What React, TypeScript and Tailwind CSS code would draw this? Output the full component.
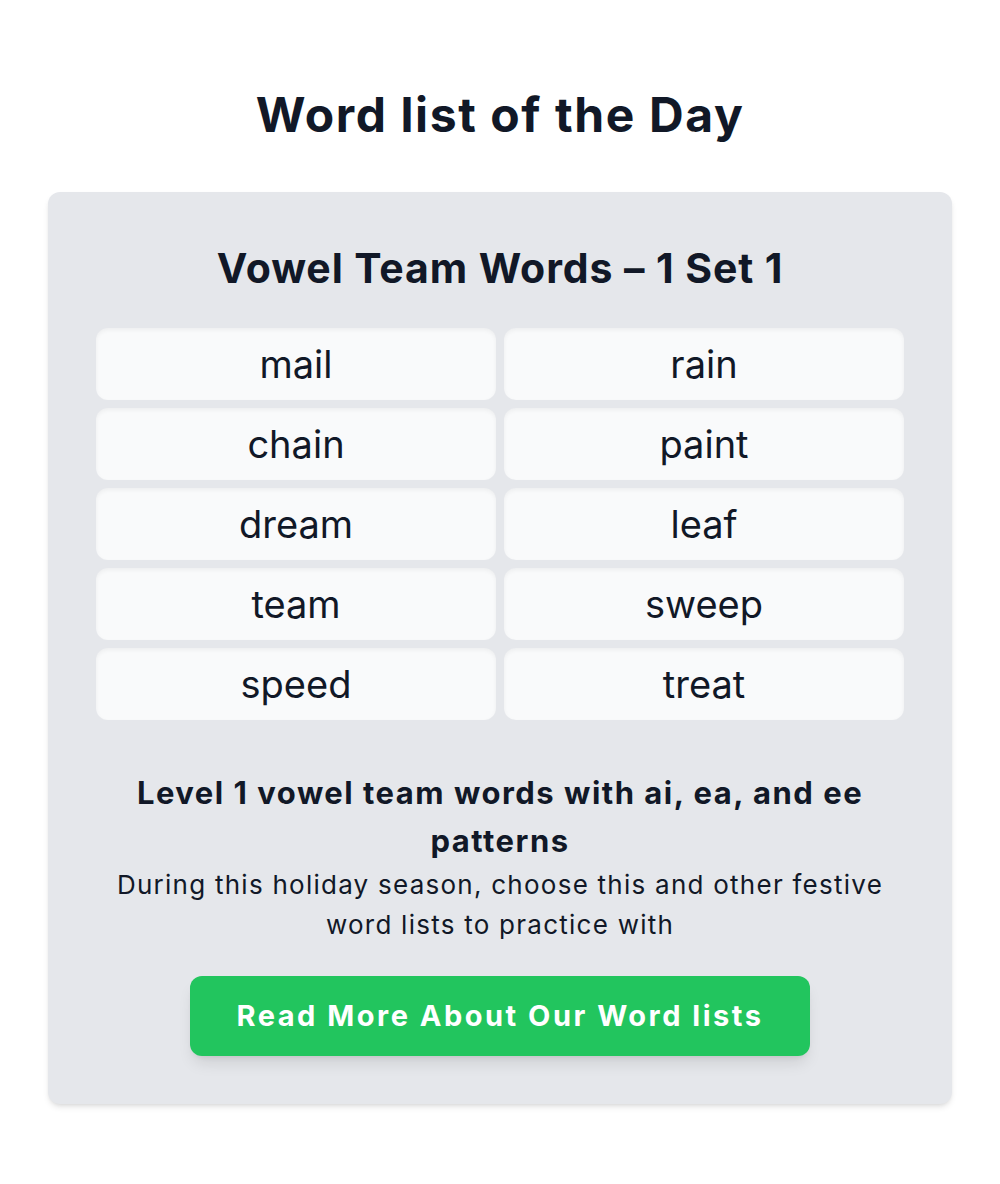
import React from 'react';

const words = ['mail', 'rain', 'chain', 'paint', 'dream', 'leaf', 'team', 'sweep', 'speed', 'treat'];

const App: React.FC = () => {
  return (
    <div className="min-h-[1184px] bg-white flex flex-col items-center pt-[87px] text-[#111827] font-['Inter',sans-serif]">
      <h1 className="text-[48px] leading-[56px] font-bold tracking-[1.6px]">Word list of the Day</h1>

      <div className="mt-[49px] w-[904px] bg-[#e5e7eb] rounded-xl shadow-md px-12 pt-[52px] pb-12 flex flex-col items-center">
        <h2 className="text-[41px] leading-[48px] font-bold tracking-[0.9px]">Vowel Team Words – 1 Set 1</h2>

        <div className="mt-[36px] w-full grid grid-cols-2 gap-2">
          {words.map((w) => (
            <div
              key={w}
              className="h-[72px] flex items-center justify-center bg-[#f9fafb] rounded-xl shadow-inner text-[38px]"
            >
              {w}
            </div>
          ))}
        </div>

        <p className="mt-[49px] text-center text-[31px] leading-[48px] font-bold tracking-[1.5px]">
          Level 1 vowel team words with ai, ea, and ee patterns
        </p>
        <p className="text-center text-[26px] leading-[40px] tracking-[1.25px]">
          During this holiday season, choose this and other festive word lists to practice with
        </p>

        <button className="mt-[31px] w-[620px] h-[80px] rounded-xl bg-[#22c55e] text-white font-bold text-[29px] tracking-[2.5px] shadow-lg">
          Read More About Our Word lists
        </button>
      </div>
    </div>
  );
};

export default App;
